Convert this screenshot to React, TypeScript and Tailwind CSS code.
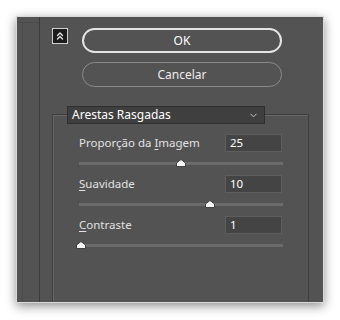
import { ChevronDown, ChevronsUp } from "lucide-react";

const rows = [
  { pre: "Proporção da ", key: "I", post: "magem", value: 25, max: 50 },
  { pre: "", key: "S", post: "uavidade", value: 10, max: 15.6 },
  { pre: "", key: "C", post: "ontraste", value: 1, max: 100 },
];

function Thumb() {
  return (
    <svg width="10" height="8" viewBox="0 0 10 8">
      <polygon points="5,0.5 9.5,4 9.5,7.5 0.5,7.5 0.5,4" fill="#f4f4f4" stroke="#2a2a2a" strokeWidth="0.8" />
    </svg>
  );
}

export default function App() {
  return (
    <div
      className="w-[340px] h-[320px] bg-white pt-[16px] pl-[16px]"
      style={{ fontFamily: '"Noto Sans", "Open Sans", sans-serif' }}
    >
      <div className="w-[308px] h-[287px] border border-[#dadada] bg-[#535353] shadow-[0_3px_10px_rgba(0,0,0,0.45)] flex">
        {/* Left strip */}
        <div className="w-[23px] flex flex-col border-r border-[#3b3b3b]">
          <div className="h-[6px] border-b border-[#4a4a4a]" />
          <div className="flex-1 ml-[5px] border-l border-[#4c4c4c]" />
        </div>

        {/* Main */}
        <div className="flex-1 flex flex-col">
          <div className="flex items-start mt-[11px]">
            <div className="ml-[12px] w-[16px] h-[16px] border border-[#cfcfcf] bg-[#1c1c1c] flex items-center justify-center">
              <ChevronsUp size={12} strokeWidth={2.5} color="#eaeaea" />
            </div>
            <button className="ml-[14px] w-[200px] h-[25px] rounded-full border-2 border-[#e4e4e4] text-white text-[12px] flex items-center justify-center">
              OK
            </button>
          </div>
          <button className="mt-[9px] ml-[42px] w-[200px] h-[25px] rounded-full border-[1.5px] border-[#8a8a8a] text-[#ededed] text-[12px] flex items-center justify-center">
            Cancelar
          </button>

          {/* Group box */}
          <div className="mt-[27px] ml-[12px] w-[257px] flex-1 border-l border-t border-r border-[#3f3f3f] shadow-[inset_1px_1px_0_#666666]">
            <div className="-mt-[9px] ml-[14px] w-[198px] h-[18px] bg-[#3f3f3f] border border-[#2f2f2f] flex items-center justify-between pl-[4px] pr-[5px] text-[12px] text-white">
              <span>Arestas Rasgadas</span>
              <ChevronDown size={11} strokeWidth={2} color="#cfcfcf" />
            </div>

            <div className="mt-[10px] pl-[26px] pr-[26px] flex flex-col">
              {rows.map((r) => (
                <div key={r.post} className="h-[41px] flex flex-col">
                  <div className="flex items-center justify-between h-[18px]">
                    <span className="text-[11.5px] text-[#e2e2e2]">
                      {r.pre}
                      <span className="underline underline-offset-2">{r.key}</span>
                      {r.post}
                    </span>
                    <div className="w-[57px] h-[18px] bg-[#444444] border border-[#5e5e5e] text-[11.5px] text-white flex items-center pl-[4px]">
                      {r.value}
                    </div>
                  </div>
                  <div className="relative mt-[10px] h-[3px] bg-[#6b6b6b] -mr-[1px]">
                    <div
                      className="absolute -top-[3px] -translate-x-1/2"
                      style={{ left: `${(r.value / r.max) * 100}%` }}
                    >
                      <Thumb />
                    </div>
                  </div>
                </div>
              ))}
            </div>
          </div>
        </div>
      </div>
    </div>
  );
}
